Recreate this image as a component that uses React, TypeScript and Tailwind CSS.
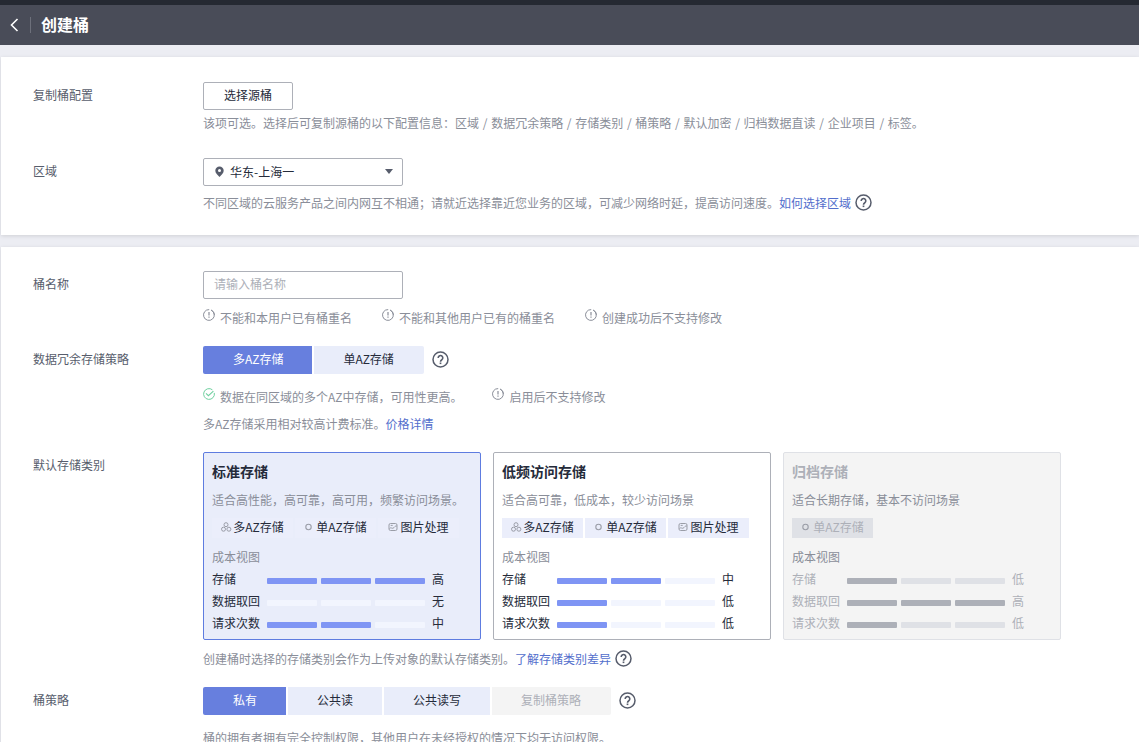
import { Fragment, useState, type ReactNode } from "react";
import clsx from "clsx";

type Tag = "multi" | "single" | "image";

type StorageClass = {
  id: string;
  title: string;
  desc: string;
  tags: Tag[];
  costs: { label: string; level: number; text: string }[];
  disabled?: boolean;
};

const TAG_LABELS: Record<Tag, string> = {
  multi: "多AZ存储",
  single: "单AZ存储",
  image: "图片处理",
};

const COPIED_SETTINGS = ["区域", "数据冗余策略", "存储类别", "桶策略", "默认加密", "归档数据直读", "企业项目", "标签。"];

const STORAGE_CLASSES: StorageClass[] = [
  {
    id: "standard",
    title: "标准存储",
    desc: "适合高性能，高可靠，高可用，频繁访问场景。",
    tags: ["multi", "single", "image"],
    costs: [
      { label: "存储", level: 3, text: "高" },
      { label: "数据取回", level: 0, text: "无" },
      { label: "请求次数", level: 2, text: "中" },
    ],
  },
  {
    id: "warm",
    title: "低频访问存储",
    desc: "适合高可靠，低成本，较少访问场景",
    tags: ["multi", "single", "image"],
    costs: [
      { label: "存储", level: 2, text: "中" },
      { label: "数据取回", level: 1, text: "低" },
      { label: "请求次数", level: 1, text: "低" },
    ],
  },
  {
    id: "cold",
    title: "归档存储",
    desc: "适合长期存储，基本不访问场景",
    tags: ["single"],
    costs: [
      { label: "存储", level: 1, text: "低" },
      { label: "数据取回", level: 3, text: "高" },
      { label: "请求次数", level: 1, text: "低" },
    ],
    disabled: true,
  },
];

function HelpButton() {
  return (
    <button type="button" aria-label="帮助" className="shrink-0 text-[#575d6c]">
      <svg width="18" height="18" viewBox="0 0 18 18" fill="none" stroke="currentColor" className="block">
        <circle cx="8.5" cy="8.5" r="7.5" strokeWidth="1.5" />
        <path d="M6.2 7a2.3 2.3 0 1 1 3.7 1.7C9 9.3 8.5 9.6 8.5 10.7" strokeWidth="1.6" />
        <path d="M8.5 11.5v1.6" strokeWidth="1.7" />
      </svg>
    </button>
  );
}

function NoticeIcon() {
  return (
    <svg width="12" height="12" viewBox="0 0 12 12" fill="none" stroke="#8a8e99" className="block shrink-0">
      <path d="M8.2 1.1A5.4 5.4 0 1 1 6.2.6" />
      <path d="M8.2 1.1A5.4 5.4 0 0 1 11.4 6" />
      <path d="M6 3v3.6M6 7.6v1.2" strokeWidth="1.2" />
    </svg>
  );
}

function SuccessIcon() {
  return (
    <svg width="12" height="12" viewBox="0 0 12 12" fill="none" stroke="#6fcf9f" className="block shrink-0">
      <path d="M11.3 4.9A5.4 5.4 0 1 1 9.4 1.8" />
      <path d="M3 5.4 5.4 7.7 10.4 3.2" strokeWidth="1.1" />
    </svg>
  );
}

function TagIcon({ tag }: { tag: Tag }) {
  return (
    <svg width="12" height="12" viewBox="0 0 12 12" fill="none" stroke="#9a9da7" className="block shrink-0">
      {tag === "multi" && (
        <>
          <circle cx="5" cy="3.7" r="2" />
          <circle cx="2.5" cy="8.2" r="2" />
          <circle cx="7.9" cy="8.2" r="2" />
        </>
      )}
      {tag === "single" && <circle cx="4.5" cy="6" r="2.7" strokeWidth="1.1" />}
      {tag === "image" && (
        <>
          <rect x="1" y="2.5" width="8" height="7" rx="1.5" />
          <path d="M1.5 7.500c1.500-1.600 2.400.3 3.600-.3S7 4.600 8.900 5" />
          <path d="M2.700 4.400h2" />
        </>
      )}
    </svg>
  );
}

function Field({ label, htmlFor, children }: { label: string; htmlFor?: string; children: ReactNode }) {
  return (
    <div className="flex">
      {htmlFor ? (
        <label htmlFor={htmlFor} className="w-[170px] shrink-0 pt-1 text-[#575d6c]">
          {label}
        </label>
      ) : (
        <div className="w-[170px] shrink-0 pt-1 text-[#575d6c]">{label}</div>
      )}
      <div className="min-w-0 flex-1">{children}</div>
    </div>
  );
}

function Tip({ icon, children }: { icon: ReactNode; children: ReactNode }) {
  return (
    <div className="flex items-start gap-[5px]">
      {icon}
      <span>{children}</span>
    </div>
  );
}

function Segmented({
  options,
  value,
  onChange,
}: {
  options: { label: string; disabled?: boolean }[];
  value: string;
  onChange: (v: string) => void;
}) {
  return (
    <div className="flex items-center gap-2">
      <div className="flex gap-0.5 overflow-hidden rounded-xs">
        {options.map((o) => (
          <button
            key={o.label}
            type="button"
            disabled={o.disabled}
            aria-pressed={o.label === value}
            onClick={() => onChange(o.label)}
            className={clsx(
              "h-7 px-[29px] pb-0.5 first:pl-[30px] last:pr-[30px]",
              o.disabled
                ? "bg-[#f4f4f4] text-[#adb0b8]"
                : o.label === value
                  ? "bg-[#677fde] text-white"
                  : "bg-[#e9edfa] text-[#252b3a]",
            )}
          >
            {o.label}
          </button>
        ))}
      </div>
      <HelpButton />
    </div>
  );
}

function StorageCard({
  item,
  checked,
  onSelect,
}: {
  item: StorageClass;
  checked: boolean;
  onSelect: () => void;
}) {
  const { disabled } = item;
  return (
    <label
      className={clsx(
        "relative block w-[278px] rounded-xs border px-2 pt-2 pb-1",
        disabled
          ? "border-[#dfe1e6] bg-[#f4f4f4] text-[#adb0b8]"
          : checked
            ? "border-[#5e7ce0] bg-[#e9edfa] text-[#252b3a]"
            : "border-[#adb0b8] bg-white text-[#252b3a]",
      )}
    >
      <input
        type="radio"
        name="storage-class"
        className="sr-only"
        checked={checked}
        disabled={disabled}
        onChange={onSelect}
      />
      <div className="text-sm leading-5 font-bold">{item.title}</div>
      <div className="mt-2.5 text-[#8a8e99]">{item.desc}</div>
      <div className="mt-[9px] flex gap-0.5">
        {item.tags.map((tag) => (
          <span
            key={tag}
            className={clsx(
              "flex h-5 w-[81px] items-center justify-center pb-0.5",
              disabled ? "bg-[#dfe1e6]" : "bg-[#ebeefb]",
            )}
          >
            <TagIcon tag={tag} />
            {TAG_LABELS[tag]}
          </span>
        ))}
      </div>
      <div className="mt-2.5 mb-[3px] text-[#8a8e99]">成本视图</div>
      {item.costs.map((c) => (
        <div key={c.label} className="flex h-[22px] items-center">
          <span className="w-[55px] pb-0.5">{c.label}</span>
          <span className="flex gap-1 pt-0.5">
            {[1, 2, 3].map((n) => (
              <span
                key={n}
                className={clsx(
                  "h-1.5 w-[50px] rounded-[1px]",
                  n <= c.level
                    ? disabled ? "bg-[#adb0b8]" : "bg-[#7f95f4]"
                    : disabled ? "bg-[#dfe1e6]" : "bg-[#f2f5fe]",
                )}
              />
            ))}
          </span>
          <span className="ml-[7px] pb-0.5">{c.text}</span>
        </div>
      ))}
    </label>
  );
}

export default function App() {
  const [redundancy, setRedundancy] = useState("多AZ存储");
  const [storageClass, setStorageClass] = useState("standard");
  const [policy, setPolicy] = useState("私有");

  return (
    <div className="h-screen overflow-hidden bg-[#ecedf3] font-['Noto_Sans_CJK_SC',sans-serif] text-[12px] leading-[18px] text-[#8a8e99]">
      <header className="flex h-[45px] items-center border-t-5 border-[#252932] bg-[#494c58] pl-2.5 text-white">
        <button type="button" aria-label="返回">
          <svg width="9" height="14" viewBox="0 0 9 14" fill="none" stroke="currentColor" strokeWidth="1.6" className="block">
            <path d="M7.5 1 1.5 7l6 6" />
          </svg>
        </button>
        <span className="ml-[11px] h-4 w-px bg-[#6d707b]" />
        <h1 className="ml-2.5 pb-0.5 text-base leading-6 font-bold">创建桶</h1>
      </header>

      <main className="flex flex-col gap-3 pt-3 pl-px">
        <section className="flex flex-col gap-[26px] bg-white pt-[25px] pb-[23px] pl-8 shadow-[0_1px_4px_rgba(0,0,0,0.12)]">
          <Field label="复制桶配置">
            <button
              type="button"
              className="block h-7 w-[90px] rounded-xs border border-[#adb0b8] bg-white pb-0.5 text-[#252b3a]"
            >
              选择源桶
            </button>
            <p className="mt-1">
              该项可选。选择后可复制源桶的以下配置信息：
              {COPIED_SETTINGS.map((name, i) => (
                <Fragment key={name}>
                  {i > 0 && <span className="mx-px"> / </span>}
                  {name}
                </Fragment>
              ))}
            </p>
          </Field>

          <Field label="区域" htmlFor="region">
            <div className="relative w-[200px]">
              <select
                id="region"
                className="block h-7 w-full appearance-none rounded-xs border border-[#adb0b8] bg-white pl-[26px] text-[#252b3a]"
              >
                <option>华东-上海一</option>
              </select>
              <svg width="10" height="12" viewBox="0 0 10 12" fill="#575d6c" className="pointer-events-none absolute top-2 left-3">
                <path
                  fillRule="evenodd"
                  d="M4.5.5A4.2 4.2 0 0 0 .3 4.7c0 2.5 2.4 4 4.2 6.2 1.8-2.2 4.2-3.7 4.2-6.2A4.2 4.2 0 0 0 4.5.5Zm0 2.6a1.500 1.500 0 1 1 0 3 1.500 1.500 0 0 1 0-3Z"
                />
              </svg>
              <svg width="8" height="5" viewBox="0 0 8 5" fill="#575d6c" className="pointer-events-none absolute top-[11px] right-2.5">
                <path d="M0 0h8L4 5Z" />
              </svg>
            </div>
            <div className="mt-2 flex items-center">
              <span>不同区域的云服务产品之间内网互不相通；请就近选择靠近您业务的区域，可减少网络时延，提高访问速度。</span>
              <a href="#region-guide" className="mr-1 text-[#526ecc]">
                如何选择区域
              </a>
              <HelpButton />
            </div>
          </Field>
        </section>

        <section className="flex flex-col gap-[19px] bg-white pt-6 pb-6 pl-8 shadow-[0_1px_4px_rgba(0,0,0,0.12)]">
          <Field label="桶名称" htmlFor="bucket-name">
            <input
              id="bucket-name"
              type="text"
              placeholder="请输入桶名称"
              className="block h-7 w-[200px] rounded-xs border border-[#adb0b8] px-2.5 pb-1 text-[#252b3a] placeholder:text-[#adb0b8]"
            />
            <div className="mt-2.5 flex gap-[30px]">
              <Tip icon={<NoticeIcon />}>不能和本用户已有桶重名</Tip>
              <Tip icon={<NoticeIcon />}>不能和其他用户已有的桶重名</Tip>
              <Tip icon={<NoticeIcon />}>创建成功后不支持修改</Tip>
            </div>
          </Field>

          <Field label="数据冗余存储策略">
            <Segmented
              options={[{ label: "多AZ存储" }, { label: "单AZ存储" }]}
              value={redundancy}
              onChange={setRedundancy}
            />
            <div className="mt-3.5 flex gap-[30px]">
              <Tip icon={<SuccessIcon />}>数据在同区域的多个AZ中存储，可用性更高。</Tip>
              <Tip icon={<NoticeIcon />}>启用后不支持修改</Tip>
            </div>
            <p className="mt-[9px]">
              多AZ存储采用相对较高计费标准。
              <a href="#pricing" className="text-[#526ecc]">
                价格详情
              </a>
            </p>
          </Field>

          <Field label="默认存储类别">
            <div className="flex flex-wrap gap-3">
              {STORAGE_CLASSES.map((item) => (
                <StorageCard
                  key={item.id}
                  item={item}
                  checked={item.id === storageClass}
                  onSelect={() => setStorageClass(item.id)}
                />
              ))}
            </div>
            <div className="mt-2.5 flex items-center">
              <span>创建桶时选择的存储类别会作为上传对象的默认存储类别。</span>
              <a href="#storage-classes" className="mr-1 text-[#526ecc]">
                了解存储类别差异
              </a>
              <HelpButton />
            </div>
          </Field>

          <Field label="桶策略">
            <Segmented
              options={[
                { label: "私有" },
                { label: "公共读" },
                { label: "公共读写" },
                { label: "复制桶策略", disabled: true },
              ]}
              value={policy}
              onChange={setPolicy}
            />
            <p className="mt-3.5">桶的拥有者拥有完全控制权限，其他用户在未经授权的情况下均无访问权限。</p>
          </Field>
        </section>
      </main>
    </div>
  );
}
